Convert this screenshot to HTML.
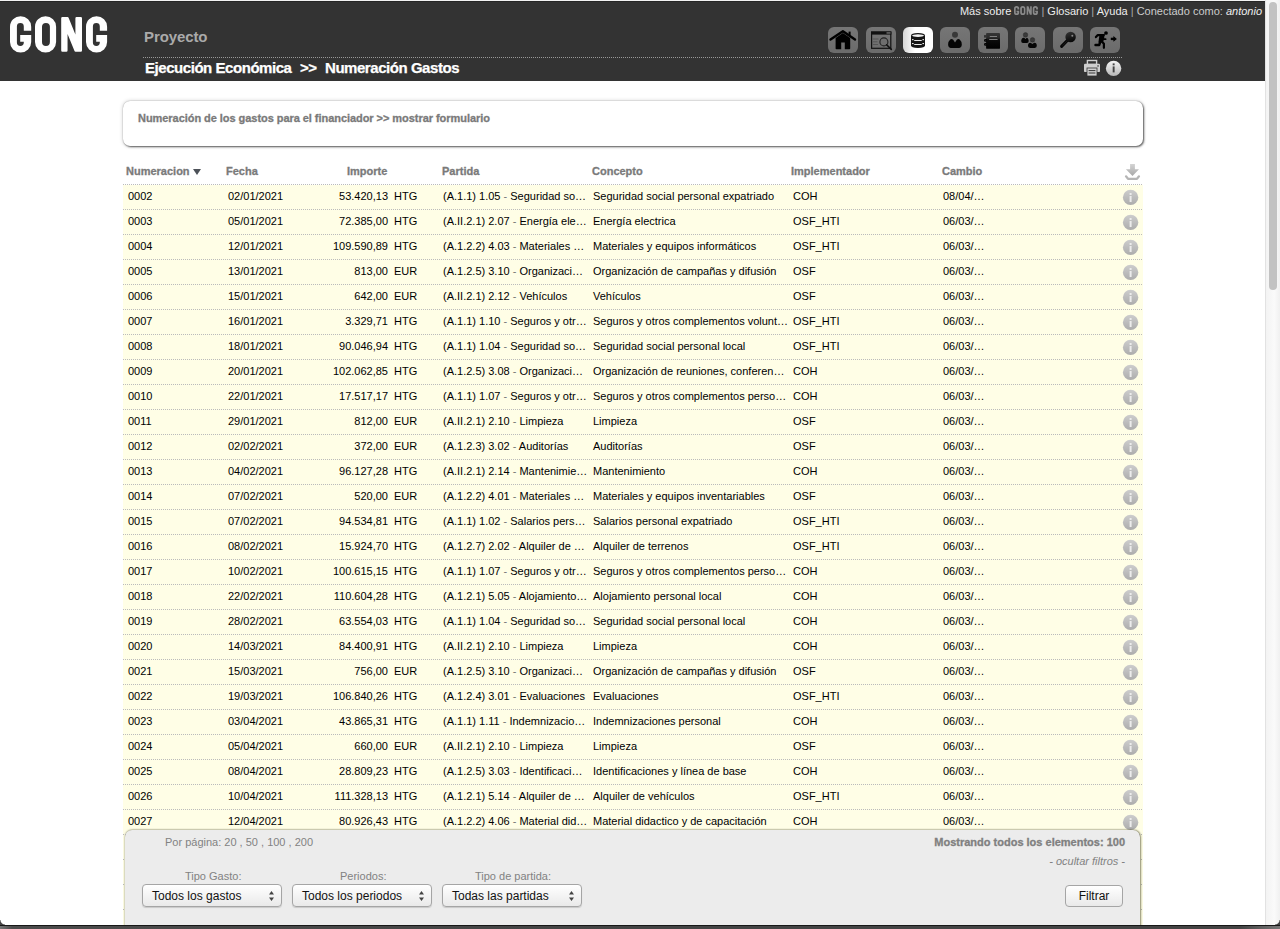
<!DOCTYPE html>
<html><head><meta charset="utf-8">
<style>
*{margin:0;padding:0;box-sizing:border-box}
html,body{width:1280px;height:929px;overflow:hidden;background:#fff;font-family:"Liberation Sans",sans-serif}
#top{position:absolute;left:0;top:0;width:1265px;height:1px;background:#f2f2f2}
#hdr{position:absolute;left:0;top:1px;width:1265px;height:80px;background:#333;border-top:1px solid #262626}
.abs{position:absolute;white-space:nowrap}
#proy{left:144px;top:28px;font-size:15px;font-weight:bold;color:#aaa;line-height:18px;letter-spacing:-0.1px}
#dots1{left:143px;top:57px;width:980px;height:1px;background-image:linear-gradient(to right,#999 50%,transparent 50%);background-size:2px 1px}
.crumb{top:59px;font-size:15px;font-weight:bold;color:#fff;line-height:18px;letter-spacing:-0.45px;-webkit-text-stroke:0.25px #fff}
#toplinks{right:18px;top:4px;font-size:11px;color:#eee;line-height:14px}
#toplinks .sep{color:#aaa}
#toplinks .gong{color:#888;font-weight:bold;font-size:11px;letter-spacing:-0.5px}
.ico{position:absolute;top:27px;width:30px;height:26px;border-radius:6px;background:linear-gradient(#767676,#6b6b6b)}
.ico.act{background:linear-gradient(to right,#d6d6d6,#fff 40%)}
#scroll{position:absolute;left:1265px;top:0;width:15px;height:925px;background:linear-gradient(to right,#f3f3f3,#fafafa 60%,#f0f0f0);border-left:1px solid #e2e2e2}
#thumb{position:absolute;left:1269px;top:2px;width:8px;height:288px;border-radius:4px;background:#c2c2c2}
#bottom{position:absolute;left:0;top:925px;width:1280px;height:4px;background:linear-gradient(to right,#777,#4c4c4c 12px,#444 50%,#444 1240px,#777);border-top:1px solid #171717}
#cornL{position:absolute;left:0;top:920px;width:5px;height:5px;background:radial-gradient(circle at 100% 0,transparent 4px,#444 5px)}
#cornR{position:absolute;left:1275px;top:920px;width:5px;height:5px;background:radial-gradient(circle at 0 0,transparent 4px,#444 5px)}
#box{position:absolute;left:123px;top:101px;width:1020px;height:45px;border-radius:7px;background:#fff;box-shadow:1px 1px 2px rgba(0,0,0,.6),0 0 4px rgba(0,0,0,.2),0 0 1px rgba(0,0,0,.3)}
#boxt{left:138px;top:112px;font-size:11px;font-weight:bold;color:#7a7a7a;line-height:13px;-webkit-text-stroke:0.3px #7a7a7a;letter-spacing:-0.05px}
.th{position:absolute;top:165px;font-size:11px;font-weight:bold;color:#7a7a7a;line-height:13px;white-space:nowrap;-webkit-text-stroke:0.3px #7a7a7a}
#tri{position:absolute;left:192.5px;top:169px;width:0;height:0;border-left:4.8px solid transparent;border-right:4.8px solid transparent;border-top:6.3px solid #4d5259}
#table{position:absolute;left:123px;top:184px;width:1020px;height:745px}
.row{position:absolute;left:123px;width:1020px;height:25px;background:#fffee6}
.row::before{content:"";position:absolute;left:0;top:-1px;width:1020px;height:1px;background-image:linear-gradient(to right,#bbb 50%,transparent 50%);background-size:2px 1px}
.c{position:absolute;top:5px;font-size:11px;color:#000;line-height:13px;white-space:nowrap}
.c.r{text-align:right}
.g{color:#777}
.info{position:absolute;left:997px;top:0px}
#panel{position:absolute;left:125px;top:830px;width:1015px;height:110px;background:#ececec;border-radius:7px 7px 0 0;box-shadow:0 0 2px rgba(40,40,0,.55),1px 0 2px rgba(40,40,0,.4)}
.pl{position:absolute;font-size:11px;color:#828282;line-height:13px;white-space:nowrap}
.sel{position:absolute;top:884px;width:140px;height:23px;border-radius:4px;border:1px solid #a5a5a5;background:linear-gradient(#fff,#e9e9e9);font-size:12px;color:#111;line-height:23px;padding-left:9px;box-shadow:0 1px 1px rgba(0,0,0,.15)}
.sel svg{position:absolute;right:6px;top:5px}
.btn{position:absolute;left:1065px;top:885px;width:58px;height:22px;border-radius:4px;border:1px solid #a5a5a5;background:linear-gradient(#fff,#e9e9e9);font-size:12px;color:#111;line-height:20px;text-align:center}
</style></head><body>
<svg width="0" height="0" style="position:absolute"><defs>
<linearGradient id="ig" x1="0" y1="0" x2="0" y2="1"><stop offset="0" stop-color="#cdcdcd"/><stop offset="1" stop-color="#acacac"/></linearGradient>
<linearGradient id="ig2" x1="0" y1="0" x2="0" y2="1"><stop offset="0" stop-color="#f4f4f4"/><stop offset="1" stop-color="#b8b8b8"/></linearGradient>
<linearGradient id="dg" x1="0" y1="0" x2="0" y2="1"><stop offset="0" stop-color="#d4d4d4"/><stop offset="1" stop-color="#a8a8a8"/></linearGradient>
<g id="infoI"><circle cx="10.6" cy="12.4" r="7.7" fill="url(#ig)"/><rect x="9.6" y="8" width="2" height="2" fill="#ececec"/><rect x="9.6" y="11" width="2" height="6" fill="#ececec"/></g>
</defs></svg>
<div id="top"></div>
<div id="hdr"></div>
<svg width="110" height="60" viewBox="0 0 110 60" style="position:absolute;left:0;top:0"><path fill-rule="evenodd" fill="#fff" d="M10 26.7 A10.6 10.5 0 0 1 31.2 26.7 V30.7 H23.8 V26.55 A3.45 3.45 0 0 0 16.9 26.55 V42.45 A3.45 3.45 0 0 0 23.8 42.45 V41.8 H20.2 V35 H31.2 V42 A10.6 10.5 0 0 1 10 42 Z"/>
<path fill-rule="evenodd" fill="#fff" d="M35 26.7 A10.55 10.5 0 0 1 56.1 26.7 V42 A10.55 10.5 0 0 1 35 42 Z M42 26.85 A3.95 3.95 0 0 1 49.9 26.85 V41.95 A3.95 3.95 0 0 1 42 41.95 Z"/>
<path fill="#fff" d="M61.2 18.2 Q61.2 17 62.4 17 L67.6 17 Q68.3 17 68.6 17.7 L75.4 34.4 V18.2 Q75.4 17 76.6 17 H80.8 Q82 17 82 18.2 V50.6 Q82 51.8 80.8 51.8 L75.5 51.8 Q74.8 51.8 74.5 51.1 L67.55 34 V50.6 Q67.55 51.8 66.35 51.8 H62.4 Q61.2 51.8 61.2 50.6 Z"/>
<path fill-rule="evenodd" fill="#fff" d="M86 26.7 A10.55 10.5 0 0 1 107.1 26.7 V30.7 H99.8 V26.55 A3.45 3.45 0 0 0 92.9 26.55 V42.45 A3.45 3.45 0 0 0 99.8 42.45 V41.8 H96.2 V35 H107.1 V42 A10.55 10.5 0 0 1 86 42 Z"/></svg>
<div class="abs" id="proy">Proyecto</div>
<div class="abs" id="dots1"></div>
<div class="abs crumb" style="left:145px">Ejecución Económica</div><div class="abs crumb" style="left:300px">&gt;&gt;</div><div class="abs crumb" style="left:325px">Numeración Gastos</div>
<div class="abs" id="toplinks">Más sobre <svg width="24" height="9" viewBox="10 16.2 97.3 36.3" preserveAspectRatio="none" style="vertical-align:0px"><path fill-rule="evenodd" fill="#8a8a8a" d="M10 26.7 A10.6 10.5 0 0 1 31.2 26.7 V30.7 H23.8 V26.55 A3.45 3.45 0 0 0 16.9 26.55 V42.45 A3.45 3.45 0 0 0 23.8 42.45 V41.8 H20.2 V35 H31.2 V42 A10.6 10.5 0 0 1 10 42 Z"/>
<path fill-rule="evenodd" fill="#8a8a8a" d="M35 26.7 A10.55 10.5 0 0 1 56.1 26.7 V42 A10.55 10.5 0 0 1 35 42 Z M42 26.85 A3.95 3.95 0 0 1 49.9 26.85 V41.95 A3.95 3.95 0 0 1 42 41.95 Z"/>
<path fill="#8a8a8a" d="M61.2 18.2 Q61.2 17 62.4 17 L67.6 17 Q68.3 17 68.6 17.7 L75.4 34.4 V18.2 Q75.4 17 76.6 17 H80.8 Q82 17 82 18.2 V50.6 Q82 51.8 80.8 51.8 L75.5 51.8 Q74.8 51.8 74.5 51.1 L67.55 34 V50.6 Q67.55 51.8 66.35 51.8 H62.4 Q61.2 51.8 61.2 50.6 Z"/>
<path fill-rule="evenodd" fill="#8a8a8a" d="M86 26.7 A10.55 10.5 0 0 1 107.1 26.7 V30.7 H99.8 V26.55 A3.45 3.45 0 0 0 92.9 26.55 V42.45 A3.45 3.45 0 0 0 99.8 42.45 V41.8 H96.2 V35 H107.1 V42 A10.55 10.5 0 0 1 86 42 Z"/></svg> <span class="sep">|</span> Glosario <span class="sep">|</span> Ayuda <span class="sep">|</span> <span style="color:#ccc">Conectado como:</span> <i>antonio</i></div>
<div class="ico" style="left:828px"><svg width="30" height="26" viewBox="0 0 30 26"><path d="M2.5 12.6 L14.9 4.3 L27 12.6" fill="none" stroke="#000" stroke-width="2.4" stroke-linecap="round" stroke-linejoin="round"/>
<rect x="20.6" y="4.6" width="2" height="4" fill="#000"/>
<path d="M7.6 11 L14.9 6 L22.2 11 L22.2 21.4 Q22.2 22.2 21.4 22.2 L16.8 22.2 L16.8 15.4 L13.2 15.4 L13.2 22.2 L8.4 22.2 Q7.6 22.2 7.6 21.4 Z" fill="#000"/></svg></div>
<div class="ico" style="left:866px"><svg width="30" height="26" viewBox="0 0 30 26"><rect x="5.6" y="5.1" width="19.2" height="16.2" fill="none" stroke="#111" stroke-width="1.2"/>
<rect x="5" y="4.5" width="20.4" height="3.1" fill="#111"/>
<rect x="20.5" y="5.3" width="4" height="1.3" fill="#777"/>
<path d="M6.8 12 H12.5 M6.8 14.8 H11.5 M6.8 17.5 H12" stroke="#555" stroke-width="1"/>
<circle cx="17.9" cy="14.9" r="4" fill="#6e6e6e" stroke="#222" stroke-width="1.1"/>
<path d="M20.6 17.8 L25.3 22.4" stroke="#111" stroke-width="1.6" stroke-linecap="round"/></svg></div>
<div class="ico act" style="left:903px"><svg width="30" height="26" viewBox="0 0 30 26"><path d="M8 8.7 Q8 6 15 6 Q22 6 22 8.7 V18.2 Q22 20.9 15 20.9 Q8 20.9 8 18.2 Z" fill="#151515"/>
<ellipse cx="15" cy="8.6" rx="6" ry="1.3" fill="#f2f2f2"/>
<rect x="9" y="12.1" width="1.6" height="1.1" fill="#e6e6e6"/><rect x="19.4" y="12.1" width="1.6" height="1.1" fill="#e6e6e6"/><rect x="11.2" y="13" width="7.5" height="1" fill="#e6e6e6"/>
<rect x="9" y="16" width="1.6" height="1.1" fill="#e6e6e6"/><rect x="19.4" y="16" width="1.6" height="1.1" fill="#e6e6e6"/><rect x="11.2" y="17" width="7.5" height="1" fill="#e6e6e6"/></svg></div>
<div class="ico" style="left:940px"><svg width="30" height="26" viewBox="0 0 30 26"><circle cx="15" cy="7.85" r="3" fill="#383838"/>
<path d="M15 15.5 L13.2 12.7 Q11.6 11.5 10.2 12.6 Q8.1 14.5 8.1 17.6 Q8.1 19.6 9.2 20.3 Q9.8 20.9 10.8 20.9 H19.1 Q20.1 20.9 20.7 20.3 Q21.8 19.6 21.8 17.6 Q21.8 14.5 19.7 12.6 Q18.3 11.5 16.8 12.7 Z" fill="#050505"/></svg></div>
<div class="ico" style="left:978px"><svg width="30" height="26" viewBox="0 0 30 26"><defs><linearGradient id="nb" x1="0" y1="0" x2="0" y2="1"><stop offset="0" stop-color="#353535"/><stop offset=".3" stop-color="#2a2a2a"/><stop offset=".45" stop-color="#0c0c0c"/><stop offset="1" stop-color="#000"/></linearGradient></defs>
<rect x="8.1" y="6" width="13.9" height="15.8" rx="0.9" fill="url(#nb)"/>
<rect x="6" y="8.1" width="3" height="2.5" fill="#333"/>
<path d="M9 12.6 H7.2 Q6.6 12.6 6.6 13.4 Q6.6 14.2 7.2 14.2 H9 M9 16.6 H7.2 Q6.6 16.6 6.6 17.4 Q6.6 18.2 7.2 18.2 H9" fill="none" stroke="#050505" stroke-width="1.2"/>
<path d="M11.75 9.5 H19 M11.2 12.5 H19.6" stroke="#8a8a8a" stroke-width="0.9"/></svg></div>
<div class="ico" style="left:1015px"><svg width="30" height="26" viewBox="0 0 30 26"><circle cx="10.5" cy="7.9" r="2.3" fill="#3a3a3a" stroke="#222" stroke-width="0.4"/>
<path d="M10.5 12 L9.2 10.8 Q7.9 10.4 7 11.4 Q6.2 12.4 6.2 14 Q6.2 16 8 16 H12 Q13.7 16 13.7 14 Q13.7 12.4 12.9 11.4 Q12 10.4 11.8 10.8 Z" fill="#050505"/>
<circle cx="17.5" cy="12.9" r="2.3" fill="#3a3a3a" stroke="#222" stroke-width="0.4"/>
<path d="M17.4 17 L16 15.9 Q14.4 15.4 13.6 16.5 Q13 17.3 13 18.8 Q13 20.9 15 20.9 H19.8 Q21.8 20.9 21.8 18.8 Q21.8 17.3 21.2 16.5 Q20.4 15.4 18.8 15.9 Z" fill="#050505"/></svg></div>
<div class="ico" style="left:1053px"><svg width="30" height="26" viewBox="0 0 30 26"><defs><linearGradient id="kg" x1="0" y1="0" x2="0.3" y2="1"><stop offset="0" stop-color="#363636"/><stop offset="1" stop-color="#080808"/></linearGradient></defs>
<path d="M15 12.8 L8.6 19.4" stroke="#050505" stroke-width="3" stroke-linecap="round"/>
<path d="M14 14 L9.2 18.9" stroke="#4a4a4a" stroke-width="0.5" stroke-dasharray="0.8 0.8"/>
<circle cx="17.6" cy="10.05" r="5.2" fill="url(#kg)"/>
<circle cx="19.3" cy="8.7" r="1" fill="#8a8a8a"/></svg></div>
<div class="ico" style="left:1090px"><svg width="30" height="26" viewBox="0 0 30 26"><circle cx="16" cy="6" r="1.85" fill="#000"/>
<path d="M5.9 10.1 L7.8 8.1 H13.8" fill="none" stroke="#000" stroke-width="2.2" stroke-linecap="round" stroke-linejoin="round"/>
<path d="M9.8 7 H14.6 L14.1 12 L12.9 15.4 H8.4 L9.2 10 Z" fill="#000"/>
<path d="M14 12.2 H15.6" stroke="#000" stroke-width="1.8" stroke-linecap="round"/>
<path d="M10.4 14.5 L9.2 18 H5.5" fill="none" stroke="#000" stroke-width="2.4" stroke-linecap="round" stroke-linejoin="round"/>
<path d="M11.8 14.6 L13.9 16.8 V20.8" fill="none" stroke="#000" stroke-width="2.2" stroke-linecap="round" stroke-linejoin="round"/>
<path d="M20.8 11.9 H24.2" stroke="#000" stroke-width="2.4"/>
<path d="M23.4 9 L26.9 11.9 L23.4 14.8 Z" fill="#000"/></svg></div>
<svg style="position:absolute;left:1080px;top:58px" width="45" height="22" viewBox="1080 58 45 22">
<rect x="1087.4" y="60.5" width="9.2" height="4" fill="none" stroke="#cfcfcf" stroke-width="1.4"/>
<path d="M1085 63.8 H1099 Q1100 63.8 1100 64.8 V71.2 Q1100 72 1099.2 72 H1084.8 Q1084 72 1084 71.2 V64.8 Q1084 63.8 1085 63.8 Z" fill="#cfcfcf"/>
<rect x="1097.3" y="65.2" width="1.5" height="1.5" fill="#555"/>
<rect x="1087" y="68" width="10" height="8" fill="#cfcfcf" stroke="#333" stroke-width="0.8"/>
<path d="M1088.6 70.6 H1095.4 M1088.6 73 H1095.4" stroke="#333" stroke-width="1"/>
<circle cx="1113.6" cy="68.4" r="7.7" fill="url(#ig2)"/>
<rect x="1112.7" y="63.4" width="1.9" height="1.9" fill="#444"/>
<rect x="1112.7" y="66.4" width="1.9" height="6" fill="#444"/>
</svg>
<svg style="position:absolute;left:1120px;top:160px" width="25" height="24" viewBox="1120 160 25 24">
<path d="M1130.1 164 H1134.9 V169.2 H1139 L1132.5 176 L1125.9 169.2 H1130.1 Z" fill="url(#dg)"/>
<path d="M1126 176.3 L1128 178.8 H1137 L1139 176.3" fill="none" stroke="#b5b5b5" stroke-width="2.2" stroke-linecap="round" stroke-linejoin="round"/>
</svg>
<div id="box"></div>
<div class="abs" id="boxt">Numeración de los gastos para el financiador &gt;&gt; mostrar formulario</div>
<div class="th" style="left:126px">Numeracion</div><div id="tri"></div>
<div class="th" style="left:226px">Fecha</div>
<div class="th" style="left:347px">Importe</div>
<div class="th" style="left:442px">Partida</div>
<div class="th" style="left:592px">Concepto</div>
<div class="th" style="left:791px">Implementador</div>
<div class="th" style="left:942px">Cambio</div>
<div class="row" style="top:185px">
<span class="c" style="left:5px">0002</span>
<span class="c" style="left:105px">02/01/2021</span>
<span class="c r" style="right:755px;left:auto">53.420,13</span>
<span class="c" style="left:271px">HTG</span>
<span class="c" style="left:320px">(A.1.1) 1.05 <span class="g">-</span> Seguridad so…</span>
<span class="c" style="left:470px">Seguridad social personal expatriado</span>
<span class="c" style="left:670px">COH</span>
<span class="c" style="left:820px">08/04/…</span>
<svg class="info" width="20" height="24" viewBox="0 0 20 24"><use href="#infoI"/></svg>
</div>
<div class="row" style="top:210px">
<span class="c" style="left:5px">0003</span>
<span class="c" style="left:105px">05/01/2021</span>
<span class="c r" style="right:755px;left:auto">72.385,00</span>
<span class="c" style="left:271px">HTG</span>
<span class="c" style="left:320px">(A.II.2.1) 2.07 <span class="g">-</span> Energía ele…</span>
<span class="c" style="left:470px">Energía electrica</span>
<span class="c" style="left:670px">OSF_HTI</span>
<span class="c" style="left:820px">06/03/…</span>
<svg class="info" width="20" height="24" viewBox="0 0 20 24"><use href="#infoI"/></svg>
</div>
<div class="row" style="top:235px">
<span class="c" style="left:5px">0004</span>
<span class="c" style="left:105px">12/01/2021</span>
<span class="c r" style="right:755px;left:auto">109.590,89</span>
<span class="c" style="left:271px">HTG</span>
<span class="c" style="left:320px">(A.1.2.2) 4.03 <span class="g">-</span> Materiales …</span>
<span class="c" style="left:470px">Materiales y equipos informáticos</span>
<span class="c" style="left:670px">OSF_HTI</span>
<span class="c" style="left:820px">06/03/…</span>
<svg class="info" width="20" height="24" viewBox="0 0 20 24"><use href="#infoI"/></svg>
</div>
<div class="row" style="top:260px">
<span class="c" style="left:5px">0005</span>
<span class="c" style="left:105px">13/01/2021</span>
<span class="c r" style="right:755px;left:auto">813,00</span>
<span class="c" style="left:271px">EUR</span>
<span class="c" style="left:320px">(A.1.2.5) 3.10 <span class="g">-</span> Organizaci…</span>
<span class="c" style="left:470px">Organización de campañas y difusión</span>
<span class="c" style="left:670px">OSF</span>
<span class="c" style="left:820px">06/03/…</span>
<svg class="info" width="20" height="24" viewBox="0 0 20 24"><use href="#infoI"/></svg>
</div>
<div class="row" style="top:285px">
<span class="c" style="left:5px">0006</span>
<span class="c" style="left:105px">15/01/2021</span>
<span class="c r" style="right:755px;left:auto">642,00</span>
<span class="c" style="left:271px">EUR</span>
<span class="c" style="left:320px">(A.II.2.1) 2.12 <span class="g">-</span> Vehículos</span>
<span class="c" style="left:470px">Vehículos</span>
<span class="c" style="left:670px">OSF</span>
<span class="c" style="left:820px">06/03/…</span>
<svg class="info" width="20" height="24" viewBox="0 0 20 24"><use href="#infoI"/></svg>
</div>
<div class="row" style="top:310px">
<span class="c" style="left:5px">0007</span>
<span class="c" style="left:105px">16/01/2021</span>
<span class="c r" style="right:755px;left:auto">3.329,71</span>
<span class="c" style="left:271px">HTG</span>
<span class="c" style="left:320px">(A.1.1) 1.10 <span class="g">-</span> Seguros y otr…</span>
<span class="c" style="left:470px">Seguros y otros complementos volunt…</span>
<span class="c" style="left:670px">OSF_HTI</span>
<span class="c" style="left:820px">06/03/…</span>
<svg class="info" width="20" height="24" viewBox="0 0 20 24"><use href="#infoI"/></svg>
</div>
<div class="row" style="top:335px">
<span class="c" style="left:5px">0008</span>
<span class="c" style="left:105px">18/01/2021</span>
<span class="c r" style="right:755px;left:auto">90.046,94</span>
<span class="c" style="left:271px">HTG</span>
<span class="c" style="left:320px">(A.1.1) 1.04 <span class="g">-</span> Seguridad so…</span>
<span class="c" style="left:470px">Seguridad social personal local</span>
<span class="c" style="left:670px">OSF_HTI</span>
<span class="c" style="left:820px">06/03/…</span>
<svg class="info" width="20" height="24" viewBox="0 0 20 24"><use href="#infoI"/></svg>
</div>
<div class="row" style="top:360px">
<span class="c" style="left:5px">0009</span>
<span class="c" style="left:105px">20/01/2021</span>
<span class="c r" style="right:755px;left:auto">102.062,85</span>
<span class="c" style="left:271px">HTG</span>
<span class="c" style="left:320px">(A.1.2.5) 3.08 <span class="g">-</span> Organizaci…</span>
<span class="c" style="left:470px">Organización de reuniones, conferen…</span>
<span class="c" style="left:670px">COH</span>
<span class="c" style="left:820px">06/03/…</span>
<svg class="info" width="20" height="24" viewBox="0 0 20 24"><use href="#infoI"/></svg>
</div>
<div class="row" style="top:385px">
<span class="c" style="left:5px">0010</span>
<span class="c" style="left:105px">22/01/2021</span>
<span class="c r" style="right:755px;left:auto">17.517,17</span>
<span class="c" style="left:271px">HTG</span>
<span class="c" style="left:320px">(A.1.1) 1.07 <span class="g">-</span> Seguros y otr…</span>
<span class="c" style="left:470px">Seguros y otros complementos perso…</span>
<span class="c" style="left:670px">COH</span>
<span class="c" style="left:820px">06/03/…</span>
<svg class="info" width="20" height="24" viewBox="0 0 20 24"><use href="#infoI"/></svg>
</div>
<div class="row" style="top:410px">
<span class="c" style="left:5px">0011</span>
<span class="c" style="left:105px">29/01/2021</span>
<span class="c r" style="right:755px;left:auto">812,00</span>
<span class="c" style="left:271px">EUR</span>
<span class="c" style="left:320px">(A.II.2.1) 2.10 <span class="g">-</span> Limpieza</span>
<span class="c" style="left:470px">Limpieza</span>
<span class="c" style="left:670px">OSF</span>
<span class="c" style="left:820px">06/03/…</span>
<svg class="info" width="20" height="24" viewBox="0 0 20 24"><use href="#infoI"/></svg>
</div>
<div class="row" style="top:435px">
<span class="c" style="left:5px">0012</span>
<span class="c" style="left:105px">02/02/2021</span>
<span class="c r" style="right:755px;left:auto">372,00</span>
<span class="c" style="left:271px">EUR</span>
<span class="c" style="left:320px">(A.1.2.3) 3.02 <span class="g">-</span> Auditorías</span>
<span class="c" style="left:470px">Auditorías</span>
<span class="c" style="left:670px">OSF</span>
<span class="c" style="left:820px">06/03/…</span>
<svg class="info" width="20" height="24" viewBox="0 0 20 24"><use href="#infoI"/></svg>
</div>
<div class="row" style="top:460px">
<span class="c" style="left:5px">0013</span>
<span class="c" style="left:105px">04/02/2021</span>
<span class="c r" style="right:755px;left:auto">96.127,28</span>
<span class="c" style="left:271px">HTG</span>
<span class="c" style="left:320px">(A.II.2.1) 2.14 <span class="g">-</span> Mantenimie…</span>
<span class="c" style="left:470px">Mantenimiento</span>
<span class="c" style="left:670px">COH</span>
<span class="c" style="left:820px">06/03/…</span>
<svg class="info" width="20" height="24" viewBox="0 0 20 24"><use href="#infoI"/></svg>
</div>
<div class="row" style="top:485px">
<span class="c" style="left:5px">0014</span>
<span class="c" style="left:105px">07/02/2021</span>
<span class="c r" style="right:755px;left:auto">520,00</span>
<span class="c" style="left:271px">EUR</span>
<span class="c" style="left:320px">(A.1.2.2) 4.01 <span class="g">-</span> Materiales …</span>
<span class="c" style="left:470px">Materiales y equipos inventariables</span>
<span class="c" style="left:670px">OSF</span>
<span class="c" style="left:820px">06/03/…</span>
<svg class="info" width="20" height="24" viewBox="0 0 20 24"><use href="#infoI"/></svg>
</div>
<div class="row" style="top:510px">
<span class="c" style="left:5px">0015</span>
<span class="c" style="left:105px">07/02/2021</span>
<span class="c r" style="right:755px;left:auto">94.534,81</span>
<span class="c" style="left:271px">HTG</span>
<span class="c" style="left:320px">(A.1.1) 1.02 <span class="g">-</span> Salarios pers…</span>
<span class="c" style="left:470px">Salarios personal expatriado</span>
<span class="c" style="left:670px">OSF_HTI</span>
<span class="c" style="left:820px">06/03/…</span>
<svg class="info" width="20" height="24" viewBox="0 0 20 24"><use href="#infoI"/></svg>
</div>
<div class="row" style="top:535px">
<span class="c" style="left:5px">0016</span>
<span class="c" style="left:105px">08/02/2021</span>
<span class="c r" style="right:755px;left:auto">15.924,70</span>
<span class="c" style="left:271px">HTG</span>
<span class="c" style="left:320px">(A.1.2.7) 2.02 <span class="g">-</span> Alquiler de …</span>
<span class="c" style="left:470px">Alquiler de terrenos</span>
<span class="c" style="left:670px">OSF_HTI</span>
<span class="c" style="left:820px">06/03/…</span>
<svg class="info" width="20" height="24" viewBox="0 0 20 24"><use href="#infoI"/></svg>
</div>
<div class="row" style="top:560px">
<span class="c" style="left:5px">0017</span>
<span class="c" style="left:105px">10/02/2021</span>
<span class="c r" style="right:755px;left:auto">100.615,15</span>
<span class="c" style="left:271px">HTG</span>
<span class="c" style="left:320px">(A.1.1) 1.07 <span class="g">-</span> Seguros y otr…</span>
<span class="c" style="left:470px">Seguros y otros complementos perso…</span>
<span class="c" style="left:670px">COH</span>
<span class="c" style="left:820px">06/03/…</span>
<svg class="info" width="20" height="24" viewBox="0 0 20 24"><use href="#infoI"/></svg>
</div>
<div class="row" style="top:585px">
<span class="c" style="left:5px">0018</span>
<span class="c" style="left:105px">22/02/2021</span>
<span class="c r" style="right:755px;left:auto">110.604,28</span>
<span class="c" style="left:271px">HTG</span>
<span class="c" style="left:320px">(A.1.2.1) 5.05 <span class="g">-</span> Alojamiento…</span>
<span class="c" style="left:470px">Alojamiento personal local</span>
<span class="c" style="left:670px">COH</span>
<span class="c" style="left:820px">06/03/…</span>
<svg class="info" width="20" height="24" viewBox="0 0 20 24"><use href="#infoI"/></svg>
</div>
<div class="row" style="top:610px">
<span class="c" style="left:5px">0019</span>
<span class="c" style="left:105px">28/02/2021</span>
<span class="c r" style="right:755px;left:auto">63.554,03</span>
<span class="c" style="left:271px">HTG</span>
<span class="c" style="left:320px">(A.1.1) 1.04 <span class="g">-</span> Seguridad so…</span>
<span class="c" style="left:470px">Seguridad social personal local</span>
<span class="c" style="left:670px">COH</span>
<span class="c" style="left:820px">06/03/…</span>
<svg class="info" width="20" height="24" viewBox="0 0 20 24"><use href="#infoI"/></svg>
</div>
<div class="row" style="top:635px">
<span class="c" style="left:5px">0020</span>
<span class="c" style="left:105px">14/03/2021</span>
<span class="c r" style="right:755px;left:auto">84.400,91</span>
<span class="c" style="left:271px">HTG</span>
<span class="c" style="left:320px">(A.II.2.1) 2.10 <span class="g">-</span> Limpieza</span>
<span class="c" style="left:470px">Limpieza</span>
<span class="c" style="left:670px">COH</span>
<span class="c" style="left:820px">06/03/…</span>
<svg class="info" width="20" height="24" viewBox="0 0 20 24"><use href="#infoI"/></svg>
</div>
<div class="row" style="top:660px">
<span class="c" style="left:5px">0021</span>
<span class="c" style="left:105px">15/03/2021</span>
<span class="c r" style="right:755px;left:auto">756,00</span>
<span class="c" style="left:271px">EUR</span>
<span class="c" style="left:320px">(A.1.2.5) 3.10 <span class="g">-</span> Organizaci…</span>
<span class="c" style="left:470px">Organización de campañas y difusión</span>
<span class="c" style="left:670px">OSF</span>
<span class="c" style="left:820px">06/03/…</span>
<svg class="info" width="20" height="24" viewBox="0 0 20 24"><use href="#infoI"/></svg>
</div>
<div class="row" style="top:685px">
<span class="c" style="left:5px">0022</span>
<span class="c" style="left:105px">19/03/2021</span>
<span class="c r" style="right:755px;left:auto">106.840,26</span>
<span class="c" style="left:271px">HTG</span>
<span class="c" style="left:320px">(A.1.2.4) 3.01 <span class="g">-</span> Evaluaciones</span>
<span class="c" style="left:470px">Evaluaciones</span>
<span class="c" style="left:670px">OSF_HTI</span>
<span class="c" style="left:820px">06/03/…</span>
<svg class="info" width="20" height="24" viewBox="0 0 20 24"><use href="#infoI"/></svg>
</div>
<div class="row" style="top:710px">
<span class="c" style="left:5px">0023</span>
<span class="c" style="left:105px">03/04/2021</span>
<span class="c r" style="right:755px;left:auto">43.865,31</span>
<span class="c" style="left:271px">HTG</span>
<span class="c" style="left:320px">(A.1.1) 1.11 <span class="g">-</span> Indemnizacio…</span>
<span class="c" style="left:470px">Indemnizaciones personal</span>
<span class="c" style="left:670px">COH</span>
<span class="c" style="left:820px">06/03/…</span>
<svg class="info" width="20" height="24" viewBox="0 0 20 24"><use href="#infoI"/></svg>
</div>
<div class="row" style="top:735px">
<span class="c" style="left:5px">0024</span>
<span class="c" style="left:105px">05/04/2021</span>
<span class="c r" style="right:755px;left:auto">660,00</span>
<span class="c" style="left:271px">EUR</span>
<span class="c" style="left:320px">(A.II.2.1) 2.10 <span class="g">-</span> Limpieza</span>
<span class="c" style="left:470px">Limpieza</span>
<span class="c" style="left:670px">OSF</span>
<span class="c" style="left:820px">06/03/…</span>
<svg class="info" width="20" height="24" viewBox="0 0 20 24"><use href="#infoI"/></svg>
</div>
<div class="row" style="top:760px">
<span class="c" style="left:5px">0025</span>
<span class="c" style="left:105px">08/04/2021</span>
<span class="c r" style="right:755px;left:auto">28.809,23</span>
<span class="c" style="left:271px">HTG</span>
<span class="c" style="left:320px">(A.1.2.5) 3.03 <span class="g">-</span> Identificaci…</span>
<span class="c" style="left:470px">Identificaciones y línea de base</span>
<span class="c" style="left:670px">COH</span>
<span class="c" style="left:820px">06/03/…</span>
<svg class="info" width="20" height="24" viewBox="0 0 20 24"><use href="#infoI"/></svg>
</div>
<div class="row" style="top:785px">
<span class="c" style="left:5px">0026</span>
<span class="c" style="left:105px">10/04/2021</span>
<span class="c r" style="right:755px;left:auto">111.328,13</span>
<span class="c" style="left:271px">HTG</span>
<span class="c" style="left:320px">(A.1.2.1) 5.14 <span class="g">-</span> Alquiler de …</span>
<span class="c" style="left:470px">Alquiler de vehículos</span>
<span class="c" style="left:670px">OSF_HTI</span>
<span class="c" style="left:820px">06/03/…</span>
<svg class="info" width="20" height="24" viewBox="0 0 20 24"><use href="#infoI"/></svg>
</div>
<div class="row" style="top:810px">
<span class="c" style="left:5px">0027</span>
<span class="c" style="left:105px">12/04/2021</span>
<span class="c r" style="right:755px;left:auto">80.926,43</span>
<span class="c" style="left:271px">HTG</span>
<span class="c" style="left:320px">(A.1.2.2) 4.06 <span class="g">-</span> Material did…</span>
<span class="c" style="left:470px">Material didactico y de capacitación</span>
<span class="c" style="left:670px">COH</span>
<span class="c" style="left:820px">06/03/…</span>
<svg class="info" width="20" height="24" viewBox="0 0 20 24"><use href="#infoI"/></svg>
</div>
<div class="row" style="top:835px"></div>
<div class="row" style="top:860px"></div>
<div class="row" style="top:885px"></div>
<div class="row" style="top:910px"></div>
<div id="panel"></div>
<div class="pl" style="left:165px;top:836px">Por página: 20 , 50 , 100 , 200</div>
<div class="pl" style="right:155px;top:836px;font-weight:bold;color:#808080;-webkit-text-stroke:0.3px #808080">Mostrando todos los elementos: 100</div>
<div class="pl" style="right:155px;top:855px;font-size:11px;font-style:italic">- ocultar filtros -</div>
<div class="pl" style="left:185px;top:870px">Tipo Gasto:</div>
<div class="pl" style="left:340px;top:870px">Periodos:</div>
<div class="pl" style="left:475px;top:870px">Tipo de partida:</div>
<div class="sel" style="left:142px">Todos los gastos<svg width="7" height="12" viewBox="0 0 7 12"><path d="M3.5 1 L6 4.6 H1 Z M3.5 11 L6 7.4 H1 Z" fill="#444"/></svg></div>
<div class="sel" style="left:292px">Todos los periodos<svg width="7" height="12" viewBox="0 0 7 12"><path d="M3.5 1 L6 4.6 H1 Z M3.5 11 L6 7.4 H1 Z" fill="#444"/></svg></div>
<div class="sel" style="left:442px">Todas las partidas<svg width="7" height="12" viewBox="0 0 7 12"><path d="M3.5 1 L6 4.6 H1 Z M3.5 11 L6 7.4 H1 Z" fill="#444"/></svg></div>
<div class="btn">Filtrar</div>
<div id="bottom"></div><div id="cornL"></div>
<div id="scroll"></div>
<div id="thumb"></div><div id="cornR"></div>
</body></html>
